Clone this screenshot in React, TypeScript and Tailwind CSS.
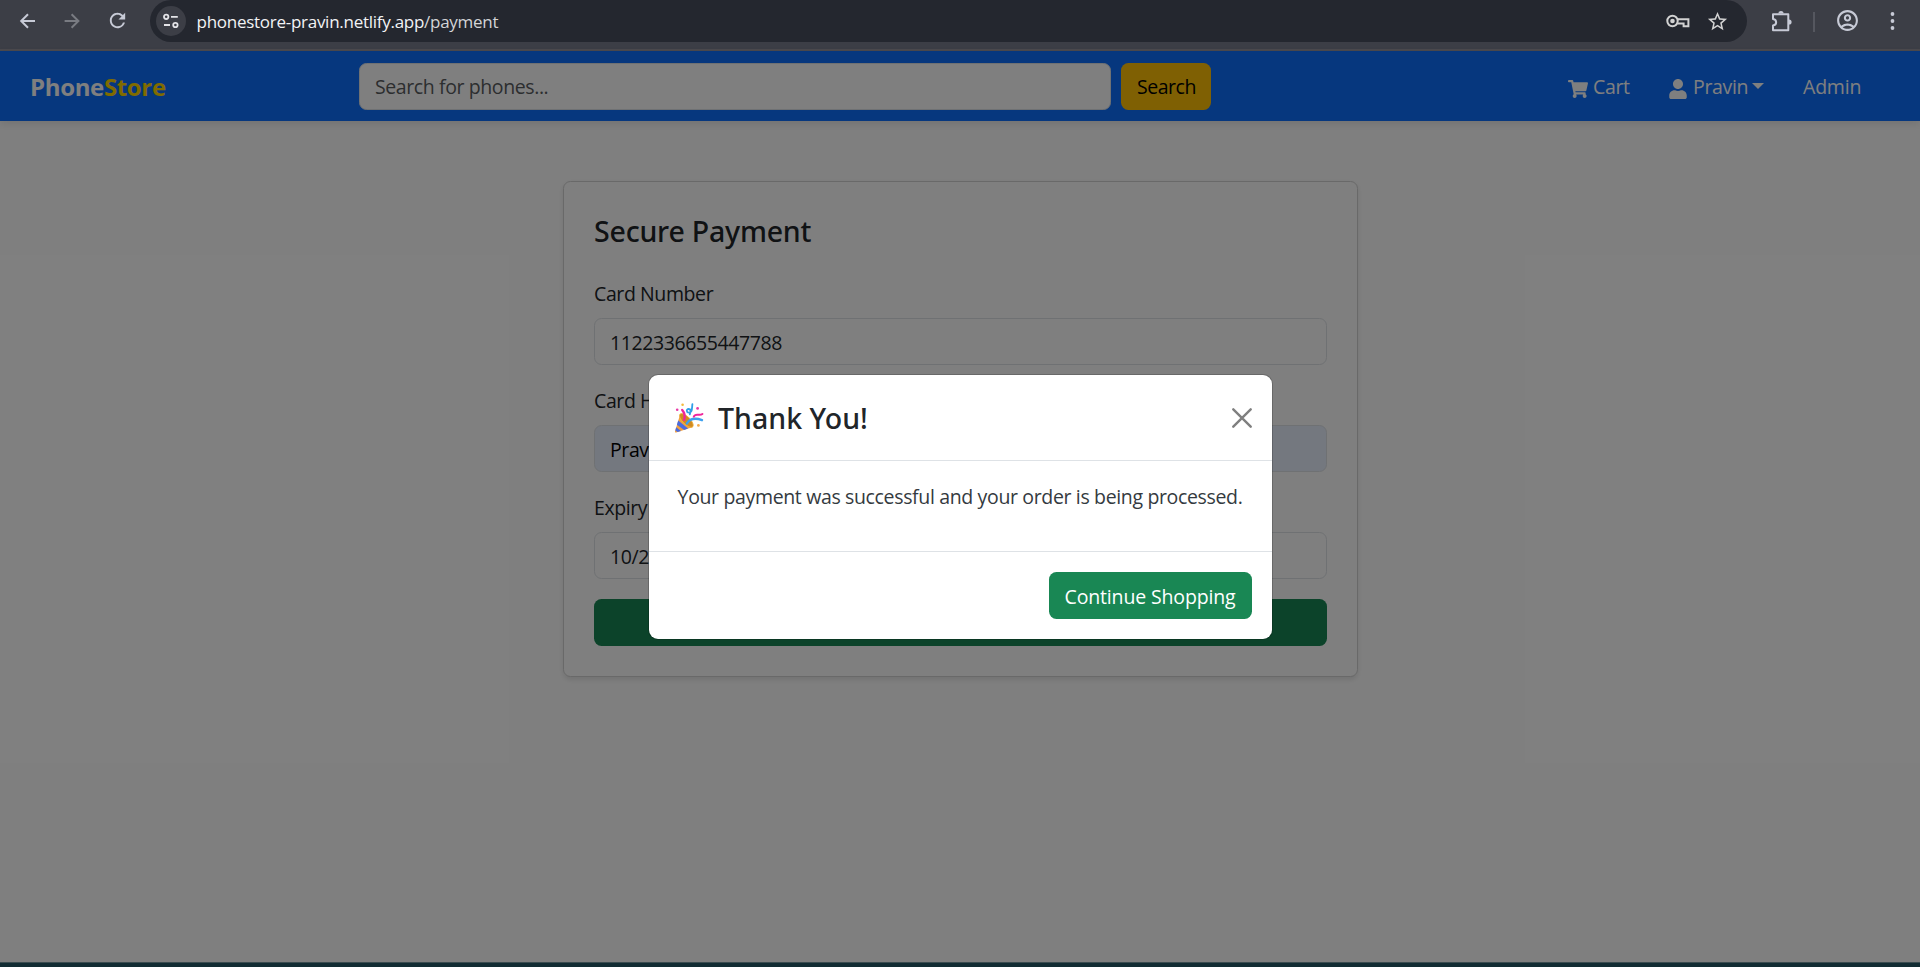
import type { ReactNode } from "react";
import { FaShoppingCart, FaUser } from "react-icons/fa";
import { MdOutlineAccountCircle, MdRefresh, MdStarBorder } from "react-icons/md";

function BrowserBar() {
  return (
    <header className="flex h-[51px] items-start border-b-2 border-[#4b494d] bg-[#3c3e46] text-[#c7cad6]">
      <div className="flex h-[41px] w-[150px] shrink-0 items-center pl-4">
        <svg className="size-6" viewBox="0 0 24 24" fill="none" stroke="currentColor" strokeWidth="2">
          <path d="M19 12H5.6M12 5.2 5.2 12l6.8 6.8" />
        </svg>
        <svg className="ml-5 size-6 text-[#797b82]" viewBox="0 0 24 24" fill="none" stroke="currentColor" strokeWidth="2">
          <path d="M4.6 12H18M11.6 5.2l6.8 6.8-6.8 6.8" />
        </svg>
        <MdRefresh className="ml-[22px] size-[23px]" />
      </div>
      <div className="flex h-[42px] w-[1597px] shrink-0 items-center rounded-full bg-[#24272f] pl-[6px] pr-[18px] text-[#d2d2d2]">
        <div className="flex size-[30px] items-center justify-center rounded-full bg-[#3c3e46]">
          <svg className="size-[18px]" viewBox="0 0 18 18" fill="none" stroke="#e4e4e8" strokeWidth="1.8">
            <circle cx="4.2" cy="4.8" r="2.2" />
            <path d="M9 4.8h6.8M2 13h6" />
            <circle cx="13.4" cy="13" r="2.2" />
          </svg>
        </div>
        <span className="ml-[10.5px] pt-px text-[17px] leading-6 tracking-[-0.27px] text-[#d3d4d6]">
          <span className="text-[#f2f3f5]">phonestore-pravin.netlify.app</span>/payment
        </span>
        <svg className="ml-auto h-4 w-6" viewBox="0 0 24 16" fill="none" stroke="currentColor" strokeWidth="2">
          <circle cx="6.5" cy="8" r="5.2" />
          <circle cx="6.5" cy="8" r="2.3" fill="currentColor" stroke="none" />
          <path d="M11.2 6.3H22.4V13.2H17.6V10.4H11.2" />
        </svg>
        <MdStarBorder className="ml-4 size-[23px]" />
      </div>
      <div className="flex h-[41px] grow items-center">
        <svg className="ml-[22px] size-6" viewBox="0 0 24 24" fill="none" stroke="currentColor" strokeWidth="2" strokeLinejoin="round">
          <path d="M4 5.3H19.3V21.2H4V16.6C8.2 16 8.2 10.6 4 10Z" />
          <path d="M9.4 4.5a2.6 2.6 0 0 1 5.2 0ZM20 10.4a2.6 2.6 0 0 1 0 5.2Z" fill="currentColor" stroke="none" />
        </svg>
        <div className="ml-5 mt-0.5 h-5 w-[2px] bg-[#55575f]" />
        <MdOutlineAccountCircle className="ml-[20px] size-[25px]" />
        <svg className="ml-5 size-6" viewBox="0 0 24 24" fill="currentColor">
          <circle cx="12.5" cy="5" r="1.9" />
          <circle cx="12.5" cy="12" r="1.9" />
          <circle cx="12.5" cy="19" r="1.9" />
        </svg>
      </div>
    </header>
  );
}

function Navbar() {
  return (
    <nav className="flex h-[70px] items-center bg-[#0d6efd] pl-[30px] text-white shadow-[0_2.5px_8px_rgba(0,0,0,0.1)]">
      <div className="w-[329px] pt-0.5 text-[24px] font-bold tracking-[-0.35px]">
        Phone<span className="text-[#ffd700]">Store</span>
      </div>
      <div className="flex gap-[10px]">
        <div className="h-[47px] w-[752px] rounded-[7.5px] border border-[#dee2e6] bg-white px-[15px] pt-[8px] leading-[30px] tracking-[-0.4px] text-[#595c5f]">
          Search for phones...
        </div>
        <button className="h-[47px] w-[90px] rounded-[7.5px] bg-[#ffc107] pl-px pt-0.5 leading-[30px] tracking-[-0.45px] text-black">
          Search
        </button>
      </div>
      <div className="ml-auto flex w-[352px] items-center">
        <div className="flex w-[101px] items-center">
          <FaShoppingCart className="mt-1.5 size-5" />
          <span className="ml-[5px] pt-0.5">Cart</span>
        </div>
        <div className="flex w-[134px] items-center">
          <FaUser className="-ml-[1px] mt-1.5 size-5" />
          <span className="ml-[5px] pt-0.5">Pravin</span>
          <svg className="ml-[4px] h-[6px] w-3" viewBox="0 0 12 6" fill="currentColor">
            <path d="M0 0h12L6 6Z" />
          </svg>
        </div>
        <span className="pt-0.5 tracking-[-0.2px]">Admin</span>
      </div>
    </nav>
  );
}

function Field({ label, value, autofilled }: { label: string; value: string; autofilled?: boolean }) {
  const tone = autofilled ? "bg-[#e8f0fe] text-black" : "bg-white";
  return (
    <div className="mb-5">
      <div className="mb-[9px] pt-px tracking-[-0.4px]">{label}</div>
      <div className={`h-[47px] rounded-[7.5px] border border-[#dee2e6] px-[15px] pt-[9px] tracking-[-0.4px] ${tone}`}>{value}</div>
    </div>
  );
}

function PaymentCard() {
  return (
    <section className="ml-[563px] mt-[60px] w-[795px] rounded-[7.5px] border border-[#d2d2d2] bg-white p-[30px] shadow-[0_2.5px_5px_rgba(0,0,0,0.1)]">
      <h4 className="mb-[29px] pt-px font-['Noto_Sans',sans-serif] text-[28.5px] font-medium leading-9 tracking-[-0.2px]">Secure Payment</h4>
      <Field label="Card Number" value="1122336655447788" />
      <Field label="Card Holder" value="Pravin" autofilled />
      <Field label="Expiry" value="10/28" />
      <button className="block h-[47px] w-full rounded-[7.5px] bg-[#198754] text-white" aria-label="Pay" />
    </section>
  );
}

function PartyPopper() {
  return (
    <svg className="h-[30px] w-[29px]" viewBox="0 0 29 30" fill="none" strokeLinecap="round">
      <path d="M5.2 11.2 0 28.4c-.2.8.4 1.3 1.2 1.1L18 24Z" fill="#f2a03f" />
      <path d="M3.2 17.4 1.9 21.8 9.2 27 13 25.6ZM1.2 24.3.3 27.4 2.7 29l3.3-1.1Z" fill="#4a6be0" />
      <ellipse cx="11.4" cy="17.4" rx="3.7" ry="9" transform="rotate(-45 11.4 17.4)" fill="#cf8a22" stroke="#f2b23c" strokeWidth=".8" />
      <path d="M9.2 16.8C10.4 12.5 9.4 9.6 7.2 7" stroke="#f0259c" strokeWidth="2.4" />
      <path d="M11.8 20.6C14.8 15.8 20.5 14.8 27 17.2" stroke="#3da0ee" strokeWidth="2.4" />
      <path d="M18.8 13.6C20.3 9.7 24.6 13.3 27.4 11" stroke="#f0259c" strokeWidth="2" />
      <path d="M17.4 1.2C16.8 6 17.4 9.3 14.2 9.6 11.2 9.8 11 6 13.6 6c2.4 0 2.2 2.6 1.2 5.4" stroke="#2f9fe8" strokeWidth="1.8" />
      <circle cx="2.2" cy="6.8" r="1.3" fill="#e83aa6" />
      <circle cx="22.6" cy="5.4" r="1.4" fill="#e83aa6" />
      <circle cx="7.6" cy="1.7" r="1.3" fill="#f5b93a" />
      <circle cx="23.4" cy="22.4" r="1.4" fill="#f3ac4f" />
    </svg>
  );
}

function Modal({ title, children }: { title: string; children: ReactNode }) {
  return (
    <div className="absolute inset-0 flex items-start justify-center bg-black/50 pl-px pt-[324px]">
      <div className="w-[623px] rounded-[9px] bg-white shadow-[0_0_0_1px_rgba(0,0,0,0.175)]">
        <div className="flex h-[86px] items-center border-b border-[#dee2e6] pl-[26px] pr-5">
          <PartyPopper />
          <h4 className="ml-[14px] pt-0.5 font-['Noto_Sans',sans-serif] text-[28.5px] font-medium leading-[45px] tracking-[0.02px]">{title}</h4>
          <svg className="ml-auto size-5" viewBox="0 0 20 20" fill="none" stroke="#7f7f7f" strokeWidth="2.4" strokeLinecap="round">
            <path d="M1.3 1.3 18.7 18.7M18.7 1.3 1.3 18.7" />
          </svg>
        </div>
        <p className="h-[90px] pr-px pt-[21px] text-center text-[#343a40]">{children}</p>
        <div className="flex h-[88px] justify-end border-t border-[#dee2e6] px-5 pt-5">
          <button className="h-[47px] w-[203px] rounded-[7.5px] bg-[#198754] pr-px pt-0.5 tracking-[-0.15px] text-white">
            Continue Shopping
          </button>
        </div>
      </div>
    </div>
  );
}

export default function App() {
  return (
    <div className="h-[967px] w-[1920px] overflow-hidden font-['Open_Sans','Noto_Sans',sans-serif]">
      <BrowserBar />
      <main className="relative h-[911px] bg-white text-[19.5px] leading-[30px] tracking-[-0.35px] text-[#212529]">
        <Navbar />
        <PaymentCard />
        <Modal title="Thank You!">Your payment was successful and your order is being processed.</Modal>
      </main>
      <div className="h-[5px] border-t border-[#3b4c50] bg-[#122c33]" />
    </div>
  );
}
